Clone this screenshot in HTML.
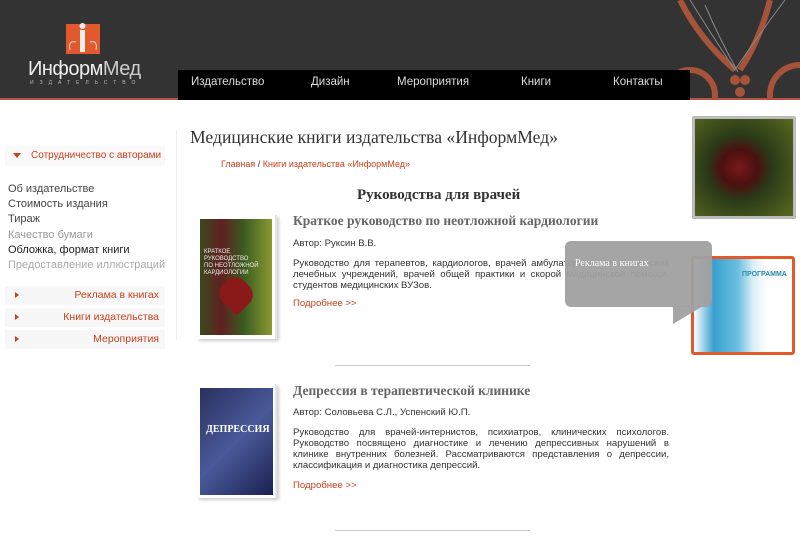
<!DOCTYPE html>
<html><head><meta charset="utf-8"><style>
*{margin:0;padding:0;box-sizing:border-box}
body{width:800px;height:550px;overflow:hidden;background:#fff;font-family:"Liberation Sans",sans-serif;position:relative}
.hdr{position:absolute;left:0;top:0;width:800px;height:100px;background:#333;border-bottom:2px solid #b5524a}
.nav{position:absolute;left:178px;top:70px;width:512px;height:30px;background:#000;color:#ddd;font-size:11.5px}
.nav span{position:absolute;top:6px}
.a{position:absolute}
.side{font-size:11px;color:#444}
.red{color:#c8411d}
.box{position:absolute;left:5px;width:160px;height:19px;background:#f7f7f7;font-size:10.5px;color:#c8411d;text-align:right;padding:3px 6px 0 0}
.box:before{content:"";position:absolute;left:10px;top:6px;border-left:4px solid #c8411d;border-top:3px solid transparent;border-bottom:3px solid transparent}
.serif{font-family:"Liberation Serif",serif}
p.t{font-size:9.6px;color:#333;text-align:justify;line-height:11px}
</style></head><body>
<div class="hdr">
 <svg class="a" style="left:660px;top:0" width="140" height="100"><g fill="none" stroke="#a6533a" stroke-width="6"><path d="M20 0 Q40 40 75 70"/><path d="M110 0 Q100 40 80 70"/><circle cx="30" cy="95" r="25"/><circle cx="140" cy="95" r="30"/></g><g fill="#a6533a"><circle cx="75" cy="80" r="5"/><circle cx="85" cy="80" r="5"/><circle cx="80" cy="92" r="5"/></g><g fill="none" stroke="#888" stroke-width="1"><path d="M30 0 Q55 40 75 70 Q95 40 125 0"/><path d="M45 5 Q60 40 78 72"/></g></svg>
 <svg class="a" style="left:64px;top:20px" width="38" height="36"><rect x="2" y="4" width="34" height="30" fill="#e2592d"/><rect x="16" y="10" width="5" height="22" fill="#eee"/><circle cx="18.5" cy="6" r="3" fill="#eee"/><path d="M6 30 Q4 20 12 22 M32 30 Q34 20 26 22" stroke="#ddd" fill="none"/></svg>
 <div class="a" style="left:28px;top:58px;color:#eee;font-size:20px;letter-spacing:-0.5px">Информ<span style="color:#ccc">Мед</span></div>
 <div class="a" style="left:30px;top:80px;color:#bbb;font-size:5px;letter-spacing:6px">ИЗДАТЕЛЬСТВО</div>
 <div class="nav"><span style="left:13px">Издательство</span><span style="left:133px">Дизайн</span><span style="left:219px">Мероприятия</span><span style="left:343px">Книги</span><span style="left:435px">Контакты</span></div>
</div>
<div class="a" style="left:5px;top:146px;width:160px;height:20px;background:#f9f9f9"></div>
<div class="a" style="left:13px;top:153px;border-top:5px solid #c8411d;border-left:4px solid transparent;border-right:4px solid transparent"></div>
<div class="a red" style="left:31px;top:150px;font-size:10px">Сотрудничество с авторами</div>
<div class="a side" style="left:8px;top:182px;line-height:15.2px">Об издательстве<br>Стоимость издания<br>Тираж<br><span style="color:#999">Качество бумаги</span><br><span style="color:#222">Обложка, формат книги</span><br><span style="color:#aaa">Предоставление иллюстраций</span></div>
<div class="box" style="top:286px">Реклама в книгах</div>
<div class="box" style="top:308px">Книги издательства</div>
<div class="box" style="top:330px">Мероприятия</div>
<div class="a" style="left:176px;top:130px;width:1px;height:210px;background:#eee"></div>
<div class="a serif" style="left:190px;top:127px;font-size:17.6px;color:#333">Медицинские книги издательства «ИнформМед»</div>
<div class="a red" style="left:221px;top:159px;font-size:9px">Главная <span style="color:#333">/</span> Книги издательства «ИнформМед»</div>
<div class="a serif" style="left:357px;top:187px;font-size:15px;color:#333;font-weight:bold">Руководства для врачей</div>
<div class="a" style="left:197px;top:215px;width:80px;height:124px;background:#fff;box-shadow:2px 2px 3px #ccc;border-right:2px solid #e5e5e5"></div>
<div class="a" style="left:200px;top:219px;width:72px;height:116px;background:linear-gradient(90deg,#3a4a20 0,#602020 30%,#3a5a20 60%,#8a9a30 100%)"><div style="position:absolute;left:20px;top:60px;width:32px;height:30px;background:#8a1a1a;border-radius:40% 40% 10% 40%;transform:rotate(45deg)"></div><div style="position:absolute;left:4px;top:30px;color:#eee;font-size:6px;line-height:7px">КРАТКОЕ РУКОВОДСТВО<br>ПО НЕОТЛОЖНОЙ<br>КАРДИОЛОГИИ</div></div>
<div class="a serif" style="left:293px;top:213px;font-size:13.5px;color:#666;font-weight:bold">Краткое руководство по неотложной кардиологии</div>
<div class="a" style="left:293px;top:238px;font-size:9.6px;color:#333">Автор: Руксин В.В.</div>
<p class="a t" style="left:293px;top:258px;width:376px">Руководство для терапевтов, кардиологов, врачей амбулаторно-поликлинических лечебных учреждений, врачей общей практики и скорой медицинской помощи, студентов медицинских ВУЗов.</p>
<div class="a red" style="left:293px;top:298px;font-size:9.6px">Подробнее &gt;&gt;</div>
<div class="a" style="left:335px;top:365px;width:195px;height:1px;background:#ccc"></div>
<div class="a" style="left:197px;top:384px;width:80px;height:114px;box-shadow:2px 2px 3px #ccc;border-right:2px solid #e5e5e5"></div>
<div class="a" style="left:200px;top:388px;width:73px;height:107px;background:linear-gradient(135deg,#2a3060,#4a5a9a 50%,#1a2050)"><div style="position:absolute;left:6px;top:36px;color:#fff;font-family:'Liberation Serif',serif;font-size:10px;font-weight:bold">ДЕПРЕССИЯ</div></div>
<div class="a serif" style="left:293px;top:383px;font-size:13.5px;color:#666;font-weight:bold">Депрессия в терапевтической клинике</div>
<div class="a" style="left:293px;top:407px;font-size:9.6px;color:#333">Автор: Соловьева С.Л., Успенский Ю.П.</div>
<p class="a t" style="left:293px;top:427px;width:376px">Руководство для врачей-интернистов, психиатров, клинических психологов. Руководство посвящено диагностике и лечению депрессивных нарушений в клинике внутренних болезней. Рассматриваются представления о депрессии, классификация и диагностика депрессий.</p>
<div class="a red" style="left:293px;top:480px;font-size:9.6px">Подробнее &gt;&gt;</div>
<div class="a" style="left:335px;top:530px;width:195px;height:1px;background:#ccc"></div>
<div class="a" style="left:692px;top:116px;width:104px;height:103px;border:3px solid #bbb;border-radius:2px;background:radial-gradient(circle at 45% 50%,#7a1818 0,#4a1010 25%,#2a3a18 45%,#5a6a20 100%)"></div>
<div class="a" style="left:691px;top:256px;width:104px;height:99px;border:3px solid #e35a2a;border-radius:3px;background:linear-gradient(90deg,#fff 0,#3aa0d0 20%,#6ac0e0 45%,#d8eef6 60%,#fff 75%)"><div style="position:absolute;left:48px;top:12px;color:#2a8ab0;font-size:7px;font-weight:bold">ПРОГРАММА</div></div>
<div class="a" style="left:565px;top:241px;width:147px;height:66px;background:rgba(160,160,160,.95);border-radius:6px"></div>
<div class="a" style="left:673px;top:306px;border-top:18px solid rgba(160,160,160,.95);border-right:30px solid transparent"></div>
<div class="a serif" style="left:575px;top:258px;color:#fff;font-size:10px">Реклама в книгах</div>
</body></html>
